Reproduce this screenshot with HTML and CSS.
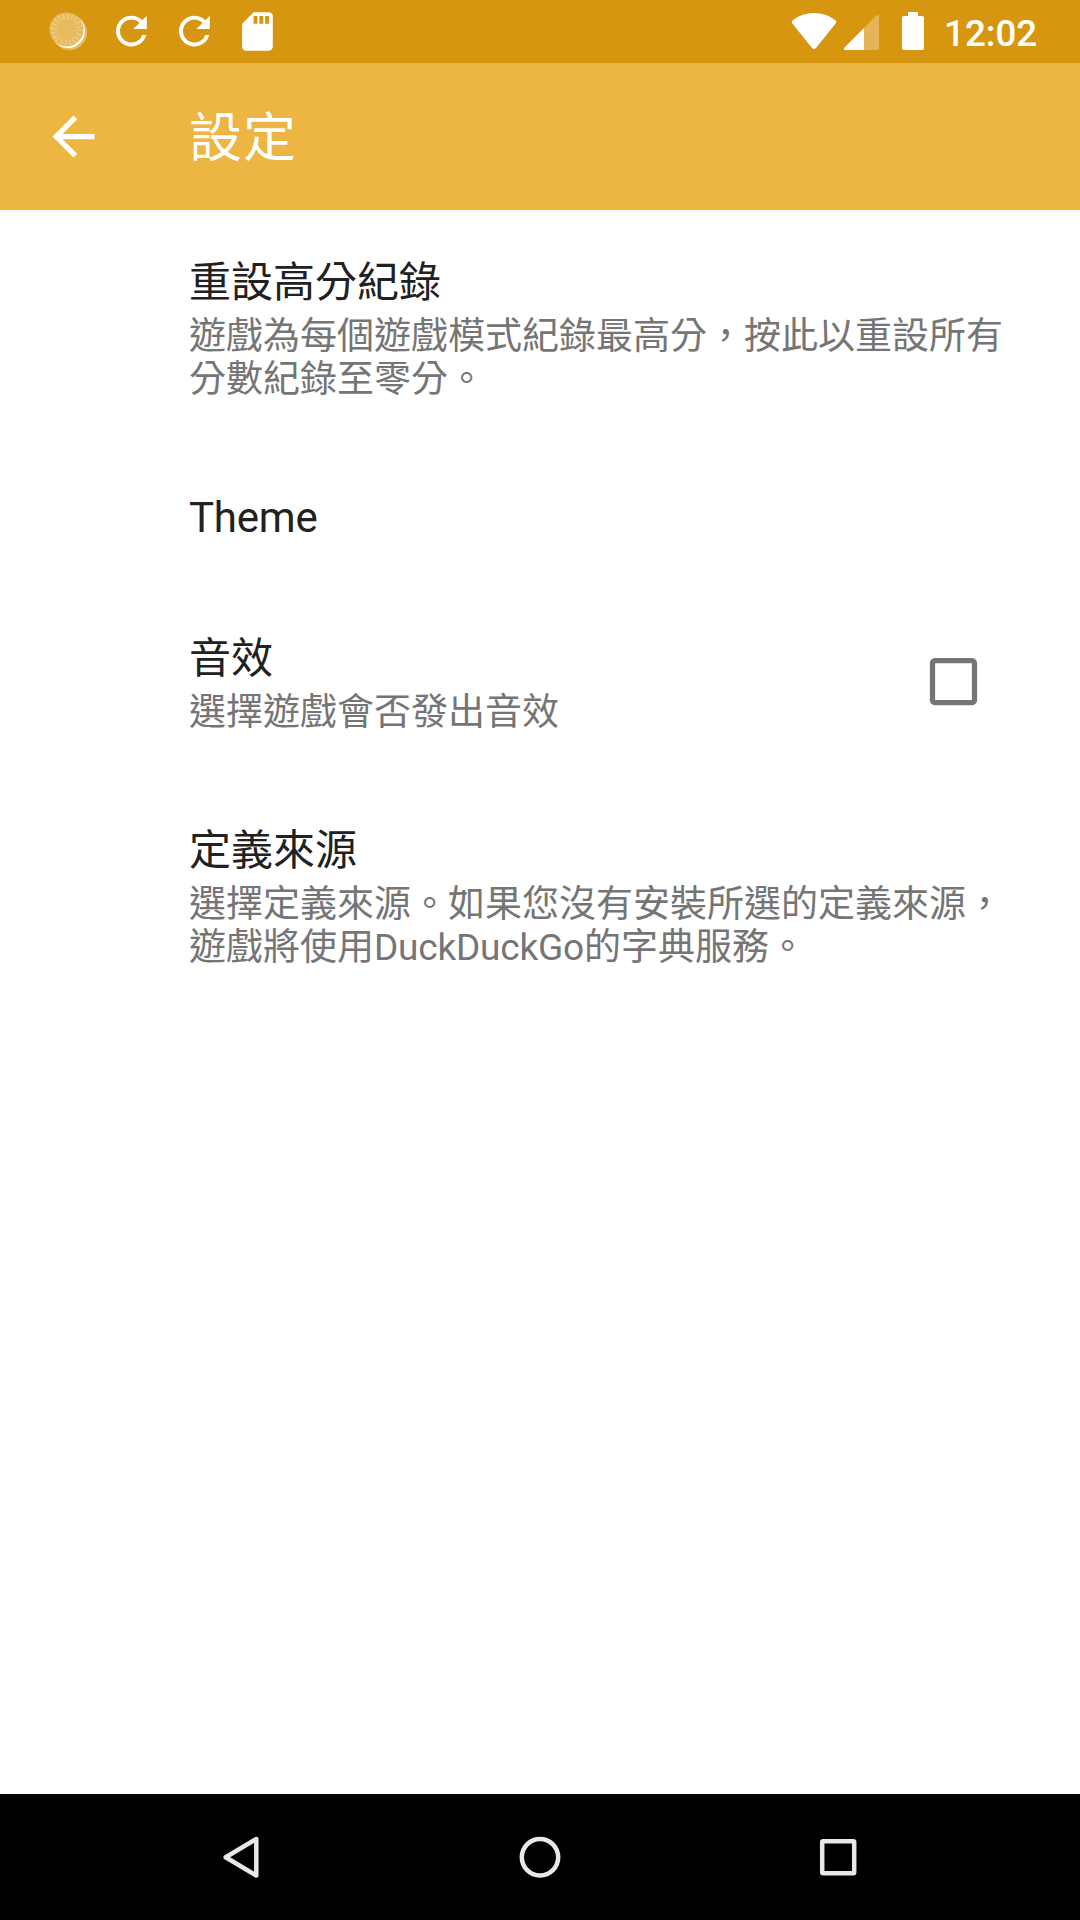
FILE: index.html
```html
<!DOCTYPE html>
<html lang="zh-Hant">
<head>
<meta charset="utf-8">
<title>設定</title>
<link rel="stylesheet" href="styles.css">
</head>
<body>
<div class="screen">
  <div class="status">
    <svg class="status-left" width="280" height="63" viewBox="0 0 280 63">
      <circle cx="69.500" cy="32.500" r="17.500" fill="#e6bd6a"/>
      <circle cx="68" cy="31" r="17" fill="#fff"/>
      <circle cx="66.500" cy="29.500" r="17" fill="#e6bb60"/>
      <circle cx="66.500" cy="29.500" r="13" fill="none" stroke="#ecca80" stroke-width="6" stroke-dasharray="1.500 2.584"/>
      <g fill="#fff">
        <path transform="translate(108.4 8) scale(1.92)" d="M17.65 6.35A7.95 7.95 0 0 0 12 4a8 8 0 1 0 7.73 10h-2.08A6 6 0 1 1 12 6c1.66 0 3.14.69 4.22 1.78L13 11h7V4z"/>
        <path transform="translate(171.4 8) scale(1.92)" d="M17.65 6.35A7.95 7.95 0 0 0 12 4a8 8 0 1 0 7.73 10h-2.08A6 6 0 1 1 12 6c1.66 0 3.14.69 4.22 1.78L13 11h7V4z"/>
        <path transform="translate(234.4 8.4) scale(1.92)" d="M18 2h-8L4.02 8 4 20c0 1.1.9 2 2 2h12c1.1 0 2-.9 2-2V4c0-1.1-.9-2-2-2zm-6 6h-2V4h2v4zm3 0h-2V4h2v4zm3 0h-2V4h2v4z"/>
      </g>
    </svg>
    <div class="status-right">
      <svg width="145" height="63" viewBox="785 0 145 63" fill="#fff">
        <path d="M814 49Q813 49 812 48L792 23Q791 21 793 20Q802 13 814 13T835 20Q837 21 836 23L816 48Q815 49 814 49Z"/>
        <path d="M864 28L876 15.500Q879 14 879 16.500V48Q879 50 877 50H864Z" opacity=".3"/>
        <path d="M864 28V50H845.500Q843 50 844.500 47.500Z"/>
        <path d="M908 12h10v4h4q2 0 2 2v30q0 2-2 2h-18q-2 0-2-2V18q0-2 2-2h4z"/>
      </svg>
      <span class="clock">12:02</span>
    </div>
  </div>
  <header class="bar">
    <svg class="back" width="63" height="63" viewBox="0 0 24 24"><path fill="#fff" d="M20 11H7.83l5.59-5.59L12 4l-8 8 8 8 1.41-1.41L7.83 13H20z"/></svg>
    <h1>設定</h1>
  </header>
  <main>
    <section class="item first"><h2>重設高分紀錄</h2><p>遊戲為每個遊戲模式紀錄最高分，按此以重設所有<br>分數紀錄至零分。</p></section>
    <section class="item theme"><h2 class="latin">Theme</h2></section>
    <section class="item sound"><div><h2>音效</h2><p>選擇遊戲會否發出音效</p></div>
      <svg width="63" height="63" viewBox="0 0 24 24"><path fill="#757575" d="M19 5v14H5V5h14m0-2H5c-1.1 0-2 .9-2 2v14c0 1.1.9 2 2 2h14c1.1 0 2-.9 2-2V5c0-1.1-.9-2-2-2z"/></svg></section>
    <section class="item"><h2>定義來源</h2><p>選擇定義來源。如果您沒有安裝所選的定義來源，<br>遊戲將使用<span class="latin">DuckDuckGo</span>的字典服務。</p></section>
  </main>
  <nav>
    <svg width="1080" height="126" viewBox="0 0 1080 126" fill="none" stroke="#e8e8e8" stroke-width="4.5">
      <path d="M256.300 45V81.500L225.700 63.200Z" stroke-linejoin="round"/>
      <circle cx="540" cy="63.200" r="18.200"/>
      <rect x="822.200" y="47.200" width="32" height="32" rx="1"/>
    </svg>
  </nav>
</div>
</body>
</html>
```
FILE: styles.css
```css
* { box-sizing: border-box; margin: 0; padding: 0; }
body { font-family: Roboto, "Noto Sans CJK TC", sans-serif; background: #fff; }
svg { display: block; flex: none; }
.screen { width: 1080px; height: 1920px; display: flex; flex-direction: column; overflow: hidden; }
.status { height: 63px; flex: none; background: #d7960f; display: flex; justify-content: space-between; }
.status-right { display: flex; width: 295px; }
.clock { color: #fff; font-size: 36.75px; font-weight: 500; line-height: 67px; margin-left: 14px; }
.bar { height: 147px; flex: none; background: #edb541; display: flex; align-items: center; padding-left: 42px; }
.bar h1 { color: #fff; font-size: 53px; font-weight: 400; line-height: 60px; letter-spacing: 1px; padding-top: 4px; margin-left: 84px; }
main { flex: 1; padding: 48px 66px 0 189px; }
.item h2 { font-size: 42px; font-weight: 400; line-height: 49px; color: #212121; white-space: nowrap; }
.item p { font-size: 37px; line-height: 43px; color: #757575; white-space: nowrap; margin-top: 8px; }
.item .latin { letter-spacing: -0.2px; }
.first { height: 235px; }
.theme { height: 141px; }
.sound { height: 192px; display: flex; justify-content: space-between; }
.sound svg { margin-top: 16px; margin-right: 29px; }
nav { height: 126px; flex: none; background: #000; }
```
